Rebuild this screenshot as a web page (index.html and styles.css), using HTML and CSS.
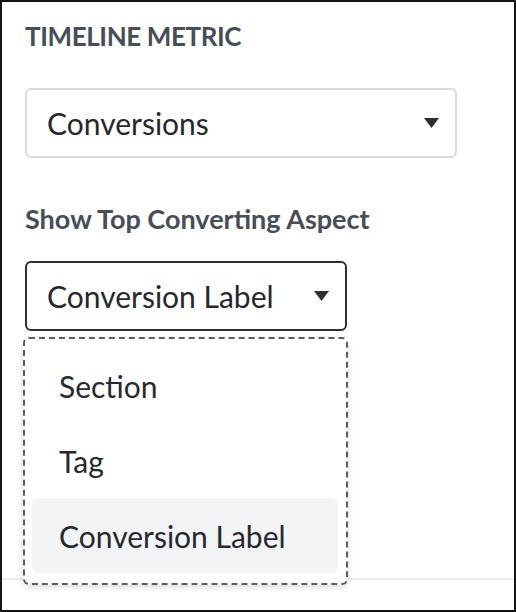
FILE: index.html
```html
<!DOCTYPE html>
<html lang="en">
<head>
  <meta charset="UTF-8">
  <meta name="viewport" content="width=device-width, initial-scale=1.0">
  <title>Timeline Settings</title>
  <link rel="stylesheet" href="styles.css">
</head>
<body>
  <div class="frame">
    <div class="panel">
      <div class="label caps">Timeline Metric</div>
      <div class="select wide">
        <span>Conversions</span>
        <svg class="caret" width="15" height="10" viewBox="0 0 15 10"><path d="M0 0 H15 L7.5 10 Z"/></svg>
      </div>

      <div class="label">Show Top Converting Aspect</div>
      <div class="select narrow active">
        <span>Conversion Label</span>
        <svg class="caret" width="15" height="10" viewBox="0 0 15 10"><path d="M0 0 H15 L7.5 10 Z"/></svg>
      </div>
    </div>
    <div class="footer"></div>

    <!-- open dropdown for the aspect select -->
    <ul class="menu">
      <li>Section</li>
      <li>Tag</li>
      <li class="selected">Conversion Label</li>
    </ul>
  </div>
</body>
</html>
```

FILE: styles.css
```css
body {
  margin: 0;
  font-family: Lato, "Open Sans", sans-serif;
  background: #fff;
}
.frame {
  position: relative;
  width: 516px;
  height: 612px;
  box-sizing: border-box;
  border: 2px solid #141414;
  display: flex;
  flex-direction: column;
  background: #fff;
}
.panel {
  flex: 1;
  padding: 17px 0 0 23px;
}
.label {
  font-size: 27px;
  font-weight: 700;
  line-height: 34px;
  color: #474e57;
}
.caps {
  font-size: 26px;
  text-transform: uppercase;
  letter-spacing: -0.4px;
}
.select {
  box-sizing: border-box;
  height: 70px;
  display: flex;
  align-items: center;
  justify-content: space-between;
  padding: 0 16px 0 20px;
  border: 2px solid #d8dce1;
  border-radius: 6px;
  font-size: 30px;
  color: #25282d;
  margin: 35px 0 44px;
}
.select.wide {
  width: 432px;
}
.select.narrow {
  width: 322px;
  margin-top: 25px;
}
.select.active {
  border-color: #2b2f36;
}
.caret {
  fill: #2b2e33;
}
.footer {
  height: 30px;
  border-top: 2px solid #ececee;
}
.menu {
  position: absolute;
  top: 335px;
  left: 21px;
  width: 325px;
  height: 248px;
  box-sizing: border-box;
  margin: 0;
  padding: 9px 8px 10px 7px;
  list-style: none;
  background: #fff;
  border: 2px dashed #5a5d62;
  border-radius: 6px;
  box-shadow: 0 2px 6px rgba(0, 0, 0, 0.15);
}
.menu li {
  height: 75px;
  display: flex;
  align-items: center;
  padding-left: 27px;
  font-size: 30px;
  color: #26292e;
  border-radius: 6px;
}
.menu li.selected {
  background: #f3f4f6;
}
```
